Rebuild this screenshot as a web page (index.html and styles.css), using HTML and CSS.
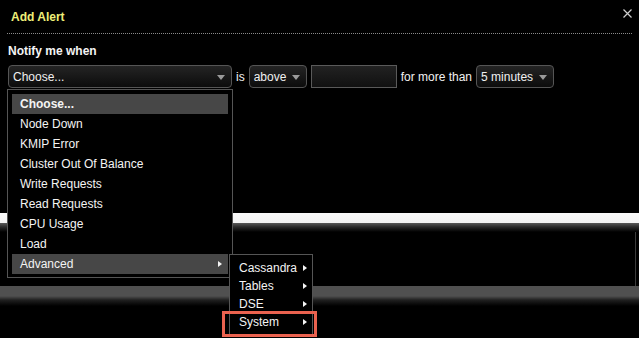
FILE: index.html
```html
<!DOCTYPE html>
<html>
<head>
<meta charset="utf-8">
<link rel="stylesheet" href="styles.css">
</head>
<body>
<div class="dialog">
  <div class="header">
    <span class="title">Add Alert</span>
    <svg class="close" width="9" height="9" viewBox="0 0 9 9"><path d="M0.5 0.5 L8.5 8.5 M8.5 0.5 L0.5 8.5" stroke="#cfcfcf" stroke-width="1.2" fill="none"/></svg>
  </div>
  <div class="content">
    <div class="label">Notify me when</div>
    <div class="row">
      <div class="select select-metric"><span>Choose...</span><span class="arrow"></span></div>
      <span class="word">is</span>
      <div class="select select-op"><span>above</span><span class="arrow"></span></div>
      <div class="input"></div>
      <span class="word">for more than</span>
      <div class="select select-dur"><span>5 minutes</span><span class="arrow"></span></div>
    </div>
  </div>
  <div class="panel">
    <div class="panel-top"></div>
    <div class="panel-body"></div>
    <div class="panel-bottom"></div>
  </div>

  <ul class="menu">
    <li class="item active bold">Choose...</li>
    <li class="item">Node Down</li>
    <li class="item">KMIP Error</li>
    <li class="item">Cluster Out Of Balance</li>
    <li class="item">Write Requests</li>
    <li class="item">Read Requests</li>
    <li class="item">CPU Usage</li>
    <li class="item">Load</li>
    <li class="item active has-sub">Advanced<span class="tri"></span></li>
  </ul>
  <ul class="submenu">
    <li class="sub-item">Cassandra<span class="tri"></span></li>
    <li class="sub-item">Tables<span class="tri"></span></li>
    <li class="sub-item">DSE<span class="tri"></span></li>
    <li class="sub-item">System<span class="tri"></span></li>
  </ul>
  <div class="callout"></div>
</div>
</body>
</html>
```
FILE: styles.css
```css
html, body {
  margin: 0;
  padding: 0;
  background: #000;
}
body {
  font-family: "Liberation Sans", Arial, Helvetica, sans-serif;
  font-size: 12px;
  color: #f2f2f2;
  width: 639px;
  height: 338px;
  overflow: hidden;
}
.dialog {
  position: relative;
  width: 639px;
  height: 338px;
}
.header {
  display: flex;
  justify-content: space-between;
  align-items: center;
  height: 33px;
  margin: 0 7px;
  padding-left: 4px;
  border-bottom: 1px dotted #8a8a8a;
}
.title {
  font-weight: bold;
  color: #eeee78;
  font-size: 12px;
}
.close {
  align-self: flex-start;
  margin-top: 9px;
}
.content {
  padding: 0 8px;
}
.label {
  margin-top: 10px;
  line-height: 14px;
  font-weight: bold;
  color: #f4f4f4;
}
.row {
  display: flex;
  align-items: center;
  gap: 4px;
  margin-top: 7px;
  height: 23px;
}
.select {
  box-sizing: border-box;
  height: 23px;
  border: 1px solid #555;
  border-radius: 4px;
  background: linear-gradient(#242424, #0c0c0c);
  display: flex;
  align-items: center;
  justify-content: space-between;
  padding: 0 6px 0 4px;
  color: #f0f0f0;
}
.select-metric { width: 224px; }
.select-op { width: 58px; }
.select-dur { width: 78px; }
.arrow {
  width: 0;
  height: 0;
  border-left: 4.5px solid transparent;
  border-right: 4.5px solid transparent;
  border-top: 5px solid #9a9a9a;
  margin-top: 1px;
}
.word {
  color: #f0f0f0;
}
.input {
  box-sizing: border-box;
  width: 86px;
  height: 23px;
  border: 1px solid #5a5a5a;
  background: linear-gradient(#222, #111);
}
.panel {
  margin-top: 125px;
}
.panel-top {
  height: 19px;
  background: linear-gradient(#fafafa 0, #f4f4f4 10px, #5a5a5a 10px, #2a2a2a 14px, #000 19px);
}
.panel-body {
  height: 54px;
  margin-right: 3px;
  border-right: 1px solid #3c3c3c;
}
.panel-bottom {
  height: 20px;
  background: linear-gradient(#505050 0, #505050 10px, #202020 14px, #000 20px);
}
.menu {
  position: absolute;
  left: 7px;
  top: 89px;
  width: 216px;
  margin: 0;
  padding: 4px 4px 3px 4px;
  list-style: none;
  background: #000;
  border: 1px solid #555;
}
.item {
  position: relative;
  height: 20px;
  line-height: 20px;
  padding-left: 8px;
  color: #f4f4f4;
}
.item.active {
  background: #474747;
}
.item.bold {
  font-weight: bold;
}
.tri {
  position: absolute;
  top: 50%;
  width: 0;
  height: 0;
  margin-top: -3.5px;
  border-top: 3.5px solid transparent;
  border-bottom: 3.5px solid transparent;
  border-left: 4px solid #f4f4f4;
}
.item .tri {
  right: 6px;
}
.submenu {
  position: absolute;
  left: 229px;
  top: 254px;
  width: 82px;
  margin: 0;
  padding: 4px 0 4px 0;
  list-style: none;
  background: #000;
  border: 1px solid #555;
}
.sub-item {
  position: relative;
  height: 18px;
  line-height: 18px;
  padding-left: 9px;
  color: #f4f4f4;
}
.sub-item .tri {
  right: 5px;
}
.callout {
  position: absolute;
  left: 222px;
  top: 311px;
  width: 89px;
  height: 20px;
  border: 3px solid #ea624f;
}
```
